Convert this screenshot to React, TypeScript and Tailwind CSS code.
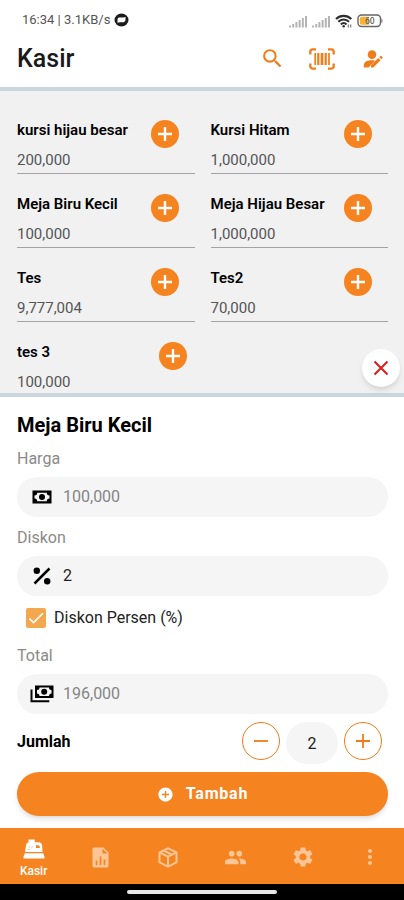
import React, { useState } from 'react';
import { MdPeople, MdSettings, MdMoreVert, MdSearch, MdCheck, MdAddCircle } from 'react-icons/md';

interface Product {
  id: number;
  name: string;
  price: number;
}

const products: Product[] = [
  { id: 1, name: 'kursi hijau besar', price: 200000 },
  { id: 2, name: 'Kursi Hitam', price: 1000000 },
  { id: 3, name: 'Meja Biru Kecil', price: 100000 },
  { id: 4, name: 'Meja Hijau Besar', price: 1000000 },
  { id: 5, name: 'Tes', price: 9777004 },
  { id: 6, name: 'Tes2', price: 70000 },
  { id: 7, name: 'tes 3', price: 100000 },
];

const format = (n: number) => n.toLocaleString('en-US');

const SignalIcon = () => (
  <svg width="19" height="13" viewBox="0 0 19 13" fill="#b4b4b4">
    <rect x="0" y="10.5" width="2" height="2" />
    <rect x="3.2" y="9" width="2" height="3.5" />
    <rect x="6.4" y="7" width="2" height="5.5" />
    <rect x="9.6" y="5" width="2" height="7.5" />
    <rect x="12.8" y="3" width="2" height="9.5" />
    <rect x="16" y="1" width="2" height="11.5" />
  </svg>
);

const WifiIcon = () => (
  <svg width="18" height="14" viewBox="0 0 18 14" fill="none" stroke="#2d2d2d" strokeWidth="2.1">
    <path d="M1 5C5.300.800 12 .800 16.300 5" />
    <path d="M3.300 7.800c3-3 7.700-3 10.700 0" />
    <path d="M5.900 10.400c1.700-1.700 3.900-1.700 5.600 0" />
    <circle cx="8.700" cy="12.300" r="1.200" fill="#2d2d2d" stroke="none" />
    <path d="M13.300 10.500v3M15.700 10.500v3" strokeWidth="1.200" stroke="#777" />
  </svg>
);

const BatteryIcon = () => (
  <svg width="27" height="14" viewBox="0 0 27 14">
    <rect x="1" y="1" width="22.500" height="11.500" rx="3.500" fill="#fff" stroke="#666" strokeWidth="1.400" />
    <path d="M4.500 2.800H12v8H4.500A1.700 1.700 0 0 1 2.800 9V4.500a1.700 1.700 0 0 1 1.700-1.700z" fill="#f9b233" />
    <path d="M24.500 4.500c1.300.4 1.300 4.200 0 4.600z" fill="#666" />
    <text x="8" y="10" fontSize="8.500" fontWeight="500" fontFamily="Roboto" fill="#666">60</text>
  </svg>
);

const ChatBadgeIcon = () => (
  <svg width="15" height="14" viewBox="0 0 15 14">
    <ellipse cx="7.500" cy="7" rx="7" ry="6.500" fill="#1c1c1c" />
    <path d="M5.200 4.600h4c1 0 1.600-.6 2.500-.5-.3.500-.2 1.300-.2 2.400 0 1.700-1 2.700-2.500 2.700H6c-1 0-1.700.6-2.700.5.400-.7.200-1.400.2-2.500 0-1.700.5-2.600 1.700-2.600z" fill="#fff" />
  </svg>
);

const BarcodeIcon = () => (
  <svg width="26" height="22" viewBox="0 0 26 22" fill="none" stroke="currentColor">
    <path d="M1.300 6.500V3.800a2.500 2.500 0 0 1 2.500-2.500H7M19 1.300h3.200a2.500 2.500 0 0 1 2.500 2.500v2.700M24.700 15.500v2.700a2.500 2.500 0 0 1-2.500 2.500H19M7 20.700H3.800a2.500 2.500 0 0 1-2.500-2.500v-2.700" strokeWidth="2.300" />
    <path d="M6.200 5v12M20 5v12" strokeWidth="1.700" />
    <path d="M9.300 5v12M16.700 5v12" strokeWidth="2.200" />
    <path d="M13 5v12" strokeWidth="2.700" />
  </svg>
);

const UserEditIcon = () => (
  <svg width="20" height="18" viewBox="0 0 20 18" fill="currentColor">
    <circle cx="9" cy="4.600" r="4.300" />
    <path d="M.800 17.500v-2.300c0-2.600 2-4.200 5.200-4.700 2-.3 4-.2 6.200.2l-6.700 6.800z" />
    <path d="M8 17.500v-2.300l7.300-7.200 2.300 2.300-7.300 7.200zM16.300 7.100l1-1c.3-.3.700-.3 1 0l1.200 1.200c.3.300.3.700 0 1l-1 1z" />
  </svg>
);

const CashIcon = () => (
  <svg width="20" height="14" viewBox="0 0 20 14">
    <rect x=".5" y=".5" width="19" height="13" fill="#000" />
    <path d="M5.200 2.700h9.600a2.700 2.700 0 0 0 2.700 2.700v3.200a2.700 2.700 0 0 0-2.700 2.700H5.200a2.700 2.700 0 0 0-2.700-2.700V5.400a2.700 2.700 0 0 0 2.700-2.700z" fill="#f5f5f5" />
    <circle cx="10" cy="7" r="3" fill="#000" />
  </svg>
);

const CashStackIcon = () => (
  <svg width="24" height="18" viewBox="0 0 24 18">
    <path d="M1.500 4.500v11.800h17.800" fill="none" stroke="#000" strokeWidth="2" />
    <rect x="5" y=".5" width="18.500" height="12.500" fill="#000" />
    <path d="M9.500 2.500H19a2.500 2.500 0 0 0 2.500 2.500v3.500A2.500 2.500 0 0 0 19 11H9.500A2.500 2.500 0 0 0 7 8.500V5a2.500 2.500 0 0 0 2.500-2.500z" fill="#f5f5f5" />
    <circle cx="14.200" cy="6.800" r="3" fill="#000" />
  </svg>
);

const PercentIcon = () => (
  <svg width="18" height="18" viewBox="0 0 18 18">
    <path d="M1.500 16.500l15-15" stroke="#000" strokeWidth="2.500" />
    <circle cx="3.800" cy="3.800" r="3.200" />
    <circle cx="14.200" cy="14.200" r="3.200" />
  </svg>
);

const RegisterIcon = () => (
  <svg width="22" height="20" viewBox="0 0 22 20" fill="currentColor">
    <path d="M5.500.5h6.300v2.800h3.500c2.600 0 3.700 1.400 3.900 3.600l.3 6.100H2L3.100 6c.2-1.500.9-2.200 2.400-2.400z" />
    <path d="M1.800 14.200h18.400l1.300 3.500v1.800H.5v-1.800z" />
    <path d="M13 6.200h1.800c1.300 0 1.900.6 2 1.800v.9H13z" fill="#f58320" />
    <path d="M5.500 8h1.300M8.500 8h1.300M5.200 10.500h1.300" stroke="#f9b478" strokeWidth="1" />
  </svg>
);

const ReportIcon = () => (
  <svg width="17" height="21" viewBox="0 0 17 21" fill="currentColor">
    <path d="M2 .5h9.500l5 5V19a1.500 1.500 0 0 1-1.500 1.500H2A1.500 1.500 0 0 1 .5 19V2A1.500 1.500 0 0 1 2 .5z" />
    <path d="M10.500 1.800v4.700h4.800z" fill="#f58320" />
    <path d="M4.500 13.500V18M8.500 9.500V18M12.500 12.500V18" stroke="#f58320" strokeWidth="1.600" />
  </svg>
);

const BoxIcon = () => (
  <svg width="20" height="21" viewBox="0 0 20 21" fill="none" stroke="currentColor" strokeWidth="2" strokeLinejoin="round">
    <path d="M10 1.300l8.500 4v10L10 19.700l-8.500-4.400v-10z" />
    <path d="M1.800 5.500L10 9.700l8.200-4.200M10 9.700v9.800M5.600 3.500l8.400 4.200" />
  </svg>
);

const PlusGlyph = ({ size, stroke }: { size: number; stroke: number }) => (
  <svg width={size} height={size} viewBox="0 0 16 16" fill="none" stroke="currentColor" strokeWidth={stroke}>
    <path d="M8 1v14M1 8h14" />
  </svg>
);

const navItems = [
  { label: 'Kasir', icon: <RegisterIcon /> },
  { label: 'Laporan', icon: <ReportIcon /> },
  { label: 'Produk', icon: <BoxIcon /> },
  { label: 'Pelanggan', icon: <MdPeople size={23} /> },
  { label: 'Pengaturan', icon: <MdSettings size={24} /> },
  { label: 'Lainnya', icon: <MdMoreVert size={24} /> },
];

interface FieldProps {
  id: string;
  label: string;
  icon: React.ReactNode;
  value: string;
  readOnly?: boolean;
  onChange?: (value: string) => void;
}

const Field: React.FC<FieldProps> = ({ id, label, icon, value, readOnly, onChange }) => (
  <div>
    <label htmlFor={id} className="block text-base leading-5 text-[#8a8a8a]">{label}</label>
    <div className="mt-2 flex h-10 items-center rounded-full bg-[#f5f5f5] pr-4 pl-3">
      <span className="flex w-[26px] shrink-0 justify-center">{icon}</span>
      <input
        id={id}
        value={value}
        readOnly={readOnly}
        onChange={(e) => onChange?.(e.target.value)}
        className={`ml-2 w-full min-w-0 bg-transparent text-base outline-none ${readOnly ? 'text-[#858585]' : 'text-[#222]'}`}
      />
    </div>
  </div>
);

const App: React.FC = () => {
  const [selected, setSelected] = useState<Product>(products[2]);
  const [discount, setDiscount] = useState('2');
  const [isPercent, setIsPercent] = useState(true);
  const [qty, setQty] = useState(2);
  const [activeTab, setActiveTab] = useState('Kasir');

  const subtotal = selected.price * qty;
  const cut = isPercent ? (subtotal * (parseFloat(discount) || 0)) / 100 : parseFloat(discount) || 0;
  const total = Math.max(0, subtotal - cut);

  return (
    <div className="flex min-h-screen flex-col bg-white font-['Roboto',sans-serif] text-black">
      <div className="flex h-9 items-end justify-between pr-5 pl-[21px] pb-2">
        <div className="flex items-center gap-1 text-[13px] leading-4 text-[#555]">
          <span className="pl-px">16:34 | 3.1KB/s</span>
          <ChatBadgeIcon />
        </div>
        <div className="flex items-center gap-1">
          <SignalIcon />
          <SignalIcon />
          <WifiIcon />
          <BatteryIcon />
        </div>
      </div>

      <header className="flex h-[51px] items-center justify-between pr-[21px] pb-1.5 pl-[17px]">
        <h1 className="text-[25px] leading-8 font-medium text-[#1a1a1a]">Kasir</h1>
        <div className="flex items-center gap-6 text-[#ef7d1a]">
          <button aria-label="Cari"><MdSearch size={25} /></button>
          <button aria-label="Pindai barcode"><BarcodeIcon /></button>
          <button aria-label="Edit pelanggan" className="pl-1"><UserEditIcon /></button>
        </div>
      </header>

      <section className="relative border-y-4 border-[#cbd5de] bg-[#f1f1f1] pt-[9px] pr-4 pb-px pl-[17px]">
        <ul className="grid grid-cols-2 gap-x-4">
          {products.map((p, i) => {
            const isLast = i === products.length - 1;
            return (
              <li key={p.id} className={`pt-5 ${isLast ? '' : 'border-b border-[#a3a3a3] pb-[3px]'}`}>
                <div className={`flex h-7 items-start justify-between ${isLast ? 'pr-2' : 'pr-4'}`}>
                  <h3 className="text-[15px] leading-5 font-semibold">{p.name}</h3>
                  <button
                    onClick={() => setSelected(p)}
                    aria-label={`Tambah ${p.name}`}
                    className="flex size-7 shrink-0 items-center justify-center rounded-full bg-[#f58320] text-white"
                  >
                    <PlusGlyph size={16} stroke={2.4} />
                  </button>
                </div>
                <p className="mt-0.5 text-[15px] leading-5 text-[#555]">{format(p.price)}</p>
              </li>
            );
          })}
        </ul>
        <button
          aria-label="Tutup"
          className="absolute right-1 bottom-1.5 flex size-[38px] items-center justify-center rounded-full bg-white text-[#dd1c1c] shadow-md"
        >
          <svg width="16" height="16" viewBox="0 0 16 16" fill="none" stroke="currentColor" strokeWidth="2">
            <path d="M1.500 1.500l13 13M14.500 1.500l-13 13" />
          </svg>
        </button>
      </section>

      <main className="flex-1 pt-4 pr-4 pb-3 pl-[17px]">
        <h2 className="text-xl leading-6 font-bold">{selected.name}</h2>

        <div className="mt-3">
          <Field id="harga" label="Harga" icon={<CashIcon />} value={format(selected.price)} readOnly />
        </div>
        <div className="mt-[11px]">
          <Field id="diskon" label="Diskon" icon={<PercentIcon />} value={discount} onChange={setDiscount} />
        </div>

        <label className="mt-3 flex h-5 items-center gap-2 pl-[9px] text-base leading-5 text-[#222]">
          <span className="relative flex size-5">
            <input
              type="checkbox"
              checked={isPercent}
              onChange={(e) => setIsPercent(e.target.checked)}
              className="size-5 appearance-none rounded-xs border-2 border-[#f3a74f] checked:bg-[#f3a74f]"
            />
            {isPercent && <MdCheck size={20} className="pointer-events-none absolute inset-0 text-white" />}
          </span>
          Diskon Persen (%)
        </label>

        <div className="mt-[18px]">
          <Field id="total" label="Total" icon={<CashStackIcon />} value={format(total)} readOnly />
        </div>

        <div className="mt-2 flex items-start justify-between pr-1.5">
          <label htmlFor="jumlah" className="mt-2.5 text-base leading-5 font-bold">Jumlah</label>
          <div className="flex items-start gap-1.5 text-[#ef7d1a]">
            <button
              onClick={() => setQty(Math.max(1, qty - 1))}
              aria-label="Kurangi"
              className="flex size-[38px] items-center justify-center rounded-full border border-[#ef7d1a]"
            >
              <svg width="16" height="16" viewBox="0 0 16 16" fill="none" stroke="currentColor" strokeWidth="1.800">
                <path d="M1 8h14" />
              </svg>
            </button>
            <input
              id="jumlah"
              value={qty}
              onChange={(e) => setQty(parseInt(e.target.value) || 1)}
              className="h-[42px] w-[52px] rounded-full bg-[#f5f5f5] text-center text-base text-[#222] outline-none"
            />
            <button
              onClick={() => setQty(qty + 1)}
              aria-label="Tambah jumlah"
              className="flex size-[38px] items-center justify-center rounded-full border border-[#ef7d1a]"
            >
              <PlusGlyph size={16} stroke={1.8} />
            </button>
          </div>
        </div>

        <button className="mt-2 flex h-11 w-full items-center justify-center gap-3 rounded-full bg-[#f58320] text-base font-bold tracking-wider text-white shadow-md">
          <MdAddCircle size={17} />
          Tambah
        </button>
      </main>

      <nav className="grid h-14 grid-cols-6 bg-[#f58320]">
        {navItems.map((item) => (
          <button
            key={item.label}
            onClick={() => setActiveTab(item.label)}
            aria-label={item.label}
            className={`flex flex-col items-center justify-center ${activeTab === item.label ? 'pt-1.5 text-white' : 'pt-0.5 text-[#fbc596]'}`}
          >
            {item.icon}
            {activeTab === item.label && <span className="mt-1 text-xs leading-4 font-medium">{item.label}</span>}
          </button>
        ))}
      </nav>
      <div className="flex h-4 items-center justify-center bg-black">
        <div className="h-1 w-[150px] rounded-full bg-[#e8e8e8]" />
      </div>
    </div>
  );
};

export default App;
